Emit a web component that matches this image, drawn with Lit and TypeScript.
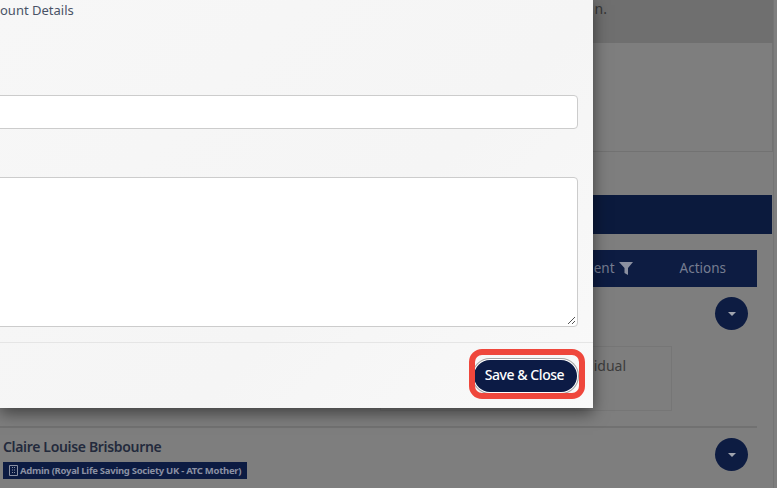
import { LitElement, html, css } from "lit";
import { customElement } from "lit/decorators.js";

@customElement("app-root")
export class AppRoot extends LitElement {
  static styles = css`
    :host { display: block; width: 777px; height: 488px; overflow: hidden; position: relative; background: #7e7e7e; font-family: "Noto Sans", sans-serif; }
    * { box-sizing: border-box; }
    .page { display: flex; flex-direction: column; height: 488px; width: 774px; border-right: 1px solid #747474; }
    .band { height: 43px; flex: none; background: #6f6f6f; color: #363636; font-size: 14px; line-height: 17px; padding: 0 166px 0 0; text-align: right; }
    .panel { height: 109px; flex: none; border-right: 1px solid #727272; border-bottom: 1px solid #727272; background: #7e7e7e; }
    .bar { height: 39px; flex: none; margin: 43px 1px 0 0; background: #0b1a3d; }
    .thead { height: 37px; flex: none; margin: 16px 16px 0 0; padding-bottom: 2px; background: #0d1c42; color: #767d91; font-size: 13.5px; display: flex; align-items: center; justify-content: flex-end; }
    .th-a { display: flex; align-items: center; gap: 4px; margin-right: 47px; }
    .th-b { margin-right: 31px; }
    .row1 { flex: none; height: 141px; margin-right: 16px; border-bottom: 2px solid #717171; position: relative; display: flex; justify-content: flex-end; padding: 10px 9px 0 0; }
    .round { width: 33px; height: 33px; flex: none; border-radius: 50%; background: #0d1c42; display: flex; align-items: center; justify-content: center; }
    .caret { width: 0; height: 0; border-left: 4px solid transparent; border-right: 4px solid transparent; border-top: 4px solid #a0a4ae; }
    .cell { position: absolute; left: 380px; right: 85px; top: 59px; height: 65px; border: 1px solid #767676; color: #3c3c3c; font-size: 14px; line-height: 19px; overflow: hidden; }
    .cell span { position: absolute; right: 45px; top: 9px; }
    .row2 { flex: 1; margin-right: 16px; display: flex; justify-content: space-between; padding: 9px 9px 0 3px; }
    .row2 .round { margin-top: 1px; }
    .name { font-size: 14px; font-weight: 600; line-height: 20px; color: #232a3c; letter-spacing: -0.33px; }
    .badge { margin-top: 5px; height: 17px; width: 244px; background: #0c1b42; color: #8a90a2; font-size: 9.5px; font-weight: 700; letter-spacing: -0.28px; display: flex; align-items: center; gap: 2px; padding-left: 6px; white-space: nowrap; }
    .badge svg { flex: none; }
    .modal { position: absolute; left: 0; top: 0; width: 593px; height: 408px; overflow: hidden; background: linear-gradient(135deg, #f7f7f7, #f5f5f5 60%, #f9f9f9); box-shadow: 0 5px 15px rgba(0,0,0,.5); display: flex; flex-direction: column; }
    .tab { height: 95px; flex: none; font-size: 13px; line-height: 20px; color: #495366; white-space: nowrap; }
    .input { height: 34px; flex: none; margin: 0 15px 0 -10px; background: #fff; border: 1px solid #ccc; border-radius: 4px; }
    .ta { height: 150px; flex: none; margin: 48px 15px 0 -10px; background: #fff; border: 1px solid #ccc; border-radius: 4px; position: relative; }
    .grip { position: absolute; right: 1px; bottom: 1px; }
    .footer { flex: 1; margin-top: 15px; border-top: 1px solid #e5e5e5; display: flex; justify-content: flex-end; align-items: flex-start; padding: 17px 16px 0 0; }
    .save { height: 32px; width: 103px; border: 0; border-radius: 16px; background: #0c1b45; color: #fff; font: 500 14px/28px "Noto Sans", sans-serif; letter-spacing: -0.45px; padding: 0 2px 2px 0; box-shadow: 0 0 0 1px #fff, 0 0 0 2px #a5a5a5; }
    .mark { position: absolute; left: 469px; top: 349px; width: 116px; height: 50px; border: 6px solid #ef473c; border-radius: 13px; }
  `;

  render() {
    return html`
      <div class="page">
        <div class="band">n.</div>
        <div class="panel"></div>
        <div class="bar"></div>
        <div class="thead">
          <div class="th-a">ment
            <svg width="14" height="14" viewBox="0 0 14 14"><path d="M0 1h14L9 7v7L5.500 12V7z" fill="#8b90a0"/></svg>
          </div>
          <div class="th-b">Actions</div>
        </div>
        <div class="row1">
          <div class="round"><div class="caret"></div></div>
          <div class="cell"><span>idual</span></div>
        </div>
        <div class="row2">
          <div>
            <div class="name">Claire Louise Brisbourne</div>
            <div class="badge">
              <svg width="9" height="11" viewBox="0 0 9 11"><path d="M.5.5h8v10h-8zM3 2.500h1M5 2.500h1M3 5h1M5 5h1M3 7.500h1M5 7.500h1" fill="none" stroke="#8a90a2"/></svg>
              Admin (Royal Life Saving Society UK - ATC Mother)
            </div>
          </div>
          <div class="round"><div class="caret"></div></div>
        </div>
      </div>
      <div class="modal">
        <div class="tab">ount Details</div>
        <div class="input"></div>
        <div class="ta">
          <svg class="grip" width="9" height="9" viewBox="0 0 9 9"><path d="M1 8l7-7M5 8l3-3" stroke="#555" stroke-width="1"/></svg>
        </div>
        <div class="footer"><button class="save">Save &amp; Close</button></div>
      </div>
      <div class="mark"></div>
    `;
  }
}
